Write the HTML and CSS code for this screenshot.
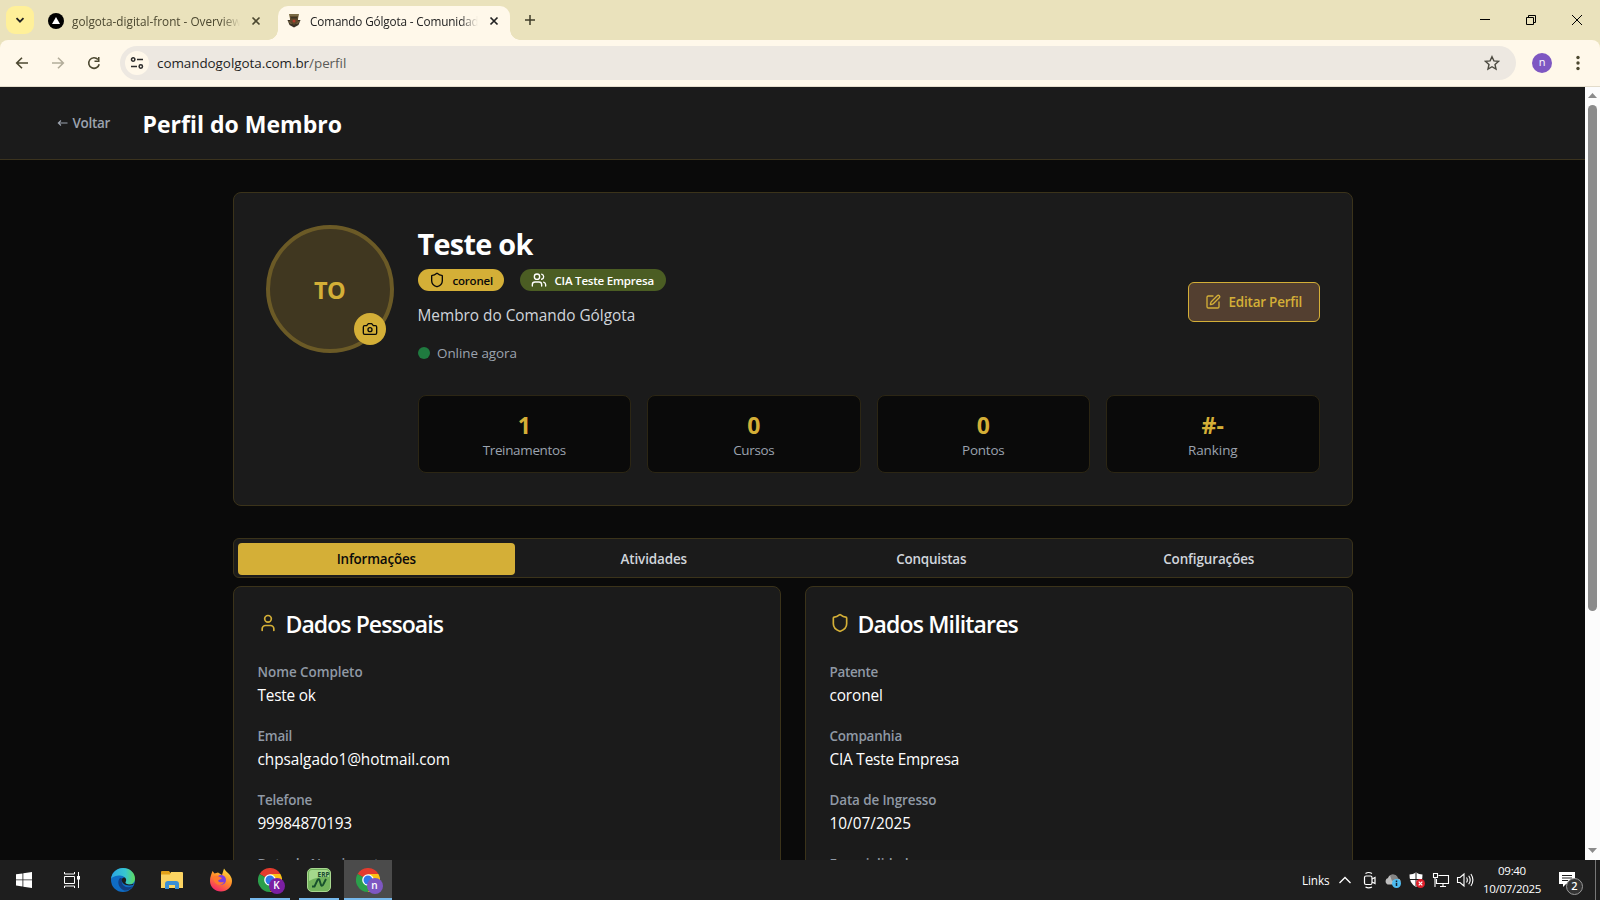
FILE: index.html
```html
<!DOCTYPE html>
<html lang="pt-BR">
<head>
<meta charset="utf-8">
<title>Comando Gólgota - Comunidade</title>
<link rel="stylesheet" href="styles.css">
</head>
<body>
<div class="screen">

  <div class="tabstrip">
    <div class="tab-search"><svg width="10" height="10" viewBox="0 0 10 10"><path d="M1.5 3.2 5 6.7 8.5 3.2" fill="none" stroke="#222" stroke-width="1.8"/></svg></div>
    <div class="tab tab-idle">
      <svg class="fav" width="16" height="16" viewBox="0 0 16 16"><circle cx="8" cy="8" r="8" fill="#000"/><path d="M8 4 12 11H4z" fill="#fff"/></svg>
      <span class="tab-title">golgota-digital-front - Overview</span>
      <svg class="x" width="10" height="10" viewBox="0 0 10 10"><path d="M1.5 1.5l7 7M8.500 1.5l-7 7" stroke="#4c4830" stroke-width="1.6"/></svg>
    </div>
    <div class="tab tab-active">
      <svg class="fav" width="16" height="16" viewBox="0 0 16 16"><path d="M3 1h10l-1 5H4z" fill="#7a6a44"/><path d="M1.500 7h13l-2 5L8 14.500 3.500 12z" fill="#3a3024"/><path d="M4 3h8v6l-4 3-4-3z" fill="#5e4a2c"/><path d="M5 4h6v1.500H5z" fill="#3d3422"/><circle cx="8" cy="8" r="1.500" fill="#b23a2b"/><path d="M2.500 8l3 3M13.500 8l-3 3" stroke="#8b7748"/></svg>
      <span class="tab-title">Comando Gólgota - Comunidade</span>
      <svg class="x" width="10" height="10" viewBox="0 0 10 10"><path d="M1.500 1.500l7 7M8.500 1.500l-7 7" stroke="#222" stroke-width="1.700"/></svg>
    </div>
    <svg class="plus" width="12" height="12" viewBox="0 0 12 12"><path d="M6 1v10M1 6h10" stroke="#3f3c28" stroke-width="1.500"/></svg>
    <div class="win">
      <svg width="12" height="12" viewBox="0 0 12 12"><path d="M1 5.500h10" stroke="#000"/></svg>
      <svg width="12" height="12" viewBox="0 0 12 12"><path d="M1.500 3.500h7v7h-7zM3.500 3.500v-2h7v7h-2" fill="none" stroke="#000"/></svg>
      <svg width="12" height="12" viewBox="0 0 12 12"><path d="M1 1l10 10M11 1 1 11" stroke="#000"/></svg>
    </div>
  </div>

  <div class="toolbar-wrap"><div class="toolbar">
    <svg width="16" height="16" viewBox="0 0 16 16"><path d="M14 8H3M8 2.700 2.700 8 8 13.300" fill="none" stroke="#4c4830" stroke-width="1.600"/></svg>
    <svg width="16" height="16" viewBox="0 0 16 16"><path d="M2 8h11M8 2.700 13.300 8 8 13.300" fill="none" stroke="#b3ad9a" stroke-width="1.600"/></svg>
    <svg width="16" height="16" viewBox="0 0 16 16"><path d="M13.200 9.200A5.300 5.300 0 1 1 12 4.500" fill="none" stroke="#4c4830" stroke-width="1.600"/><path d="M13.500 2v5h-5V5.500H12V2z" fill="#4c4830"/></svg>
    <div class="omnibox">
      <span class="site"><svg width="14" height="14" viewBox="0 0 14 14" fill="none" stroke="#2b2b2b" stroke-width="1.500"><circle cx="3.200" cy="3.500" r="1.700"/><path d="M7 3.500h6M1 10.500h6"/><circle cx="10.800" cy="10.500" r="1.700"/></svg></span>
      <span class="url t05">comandogolgota.com.br<span class="path">/perfil</span></span>
      <svg class="star" width="16" height="16" viewBox="0 0 16 16"><path d="M8 1.700l1.900 4.200 4.500.5-3.400 3.100 1 4.500L8 11.700 4 14l1-4.500L1.600 6.400l4.500-.5z" fill="none" stroke="#4c4a40" stroke-width="1.400"/></svg>
    </div>
    <span class="profile">n</span>
    <svg class="dots" width="4" height="16" viewBox="0 0 4 16" fill="#4c4830"><circle cx="2" cy="2.500" r="1.700"/><circle cx="2" cy="8" r="1.700"/><circle cx="2" cy="13.500" r="1.700"/></svg>
  </div></div>

  <div class="viewport">
    <div class="page">
      <header class="page-head">
        <a class="back t2"><svg class="arrow" width="11" height="8" viewBox="0 0 11 8"><path d="M10.500 4H1.500M4 1.500 1.300 4 4 6.500" fill="none" stroke="#9ca3af" stroke-width="1.100"/></svg>Voltar</a>
        <h1>Perfil do Membro</h1>
      </header>

      <main>
        <section class="card hero">
          <div class="avatar">TO
            <span class="camera"><svg class="ic" width="16" height="16" viewBox="0 0 24 24"><path d="M14.500 4h-5L7 7H4a2 2 0 0 0-2 2v9a2 2 0 0 0 2 2h16a2 2 0 0 0 2-2V9a2 2 0 0 0-2-2h-3l-2.500-3z"/><circle cx="12" cy="13" r="3"/></svg></span>
          </div>
          <div class="hero-body">
            <div class="hero-top">
              <div>
                <h2 class="name">Teste ok</h2>
                <div class="badges">
                  <span class="badge gold t2"><svg class="ic" width="16" height="16" viewBox="0 0 24 24"><path d="M20 13c0 5-3.500 7.500-7.660 8.950a1 1 0 0 1-.67-.01C7.500 20.500 4 18 4 13V6a1 1 0 0 1 1-1c2 0 4.500-1.200 6.240-2.720a1.170 1.170 0 0 1 1.520 0C14.510 3.810 17 5 19 5a1 1 0 0 1 1 1z"/></svg>coronel</span>
                  <span class="badge green t2"><svg class="ic" width="16" height="16" viewBox="0 0 24 24"><path d="M16 21v-2a4 4 0 0 0-4-4H6a4 4 0 0 0-4 4v2"/><circle cx="9" cy="7" r="4"/><path d="M22 21v-2a4 4 0 0 0-3-3.870M16 3.130a4 4 0 0 1 0 7.750"/></svg>CIA Teste Empresa</span>
                </div>
                <p class="role">Membro do Comando Gólgota</p>
                <p class="online t05"><i></i>Online agora</p>
              </div>
              <button class="edit t2"><svg class="ic" width="16" height="16" viewBox="0 0 24 24"><path d="M12 3H5a2 2 0 0 0-2 2v14a2 2 0 0 0 2 2h14a2 2 0 0 0 2-2v-7"/><path d="M18.375 2.625a1 1 0 0 1 3 3l-9.013 9.014a2 2 0 0 1-.853.505l-2.873.84a.5.5 0 0 1-.62-.62l.84-2.873a2 2 0 0 1 .506-.852z"/></svg>Editar Perfil</button>
            </div>
            <div class="stats">
              <div class="stat"><b>1</b><span class="t3">Treinamentos</span></div>
              <div class="stat"><b>0</b><span class="t3">Cursos</span></div>
              <div class="stat"><b>0</b><span class="t2">Pontos</span></div>
              <div class="stat"><b>#-</b><span class="t05">Ranking</span></div>
            </div>
          </div>
        </section>

        <nav class="tabs">
          <span class="on t2">Informações</span><span class="t1">Atividades</span><span class="t2">Conquistas</span><span class="t1">Configurações</span>
        </nav>

        <div class="cols">
          <section class="card info">
            <h3><svg class="ic" width="20" height="20" viewBox="0 0 24 24"><path d="M19 21v-2a4 4 0 0 0-4-4H9a4 4 0 0 0-4 4v2"/><circle cx="12" cy="7" r="4"/></svg><span class="wide">Dados Pessoais</span></h3>
            <dl>
              <dt class="t05">Nome Completo</dt><dd class="t2">Teste ok</dd>
              <dt class="t2">Email</dt><dd class="t05">chpsalgado1@hotmail.com</dd>
              <dt class="t2">Telefone</dt><dd class="t2">99984870193</dd>
              <dt class="t1">Data de Nascimento</dt>
            </dl>
          </section>
          <section class="card info">
            <h3><svg class="ic" width="20" height="20" viewBox="0 0 24 24"><path d="M20 13c0 5-3.500 7.500-7.660 8.950a1 1 0 0 1-.67-.01C7.500 20.500 4 18 4 13V6a1 1 0 0 1 1-1c2 0 4.500-1.200 6.240-2.720a1.170 1.170 0 0 1 1.520 0C14.510 3.810 17 5 19 5a1 1 0 0 1 1 1z"/></svg><span>Dados Militares</span></h3>
            <dl>
              <dt class="t3">Patente</dt><dd class="t1">coronel</dd>
              <dt class="t2">Companhia</dt><dd class="t2">CIA Teste Empresa</dd>
              <dt class="t1">Data de Ingresso</dt><dd>10/07/2025</dd>
              <dt class="t1">Especialidade</dt>
            </dl>
          </section>
        </div>
      </main>
    </div>
    <div class="scrollbar">
      <svg width="9" height="5" viewBox="0 0 9 5"><path d="M4.500 0 9 5H0z" fill="#8b8b8b"/></svg>
      <div class="thumb"></div>
      <svg class="down" width="9" height="5" viewBox="0 0 9 5"><path d="M0 0h9L4.500 5z" fill="#8b8b8b"/></svg>
    </div>
  </div>

  <div class="taskbar">
    <div class="slot sys"><svg width="16" height="16" viewBox="0 0 16 16" fill="#fff"><path d="M0 2.300 6.500 1.400v6.100H0zM7.300 1.300 16 0v7.500H7.300zM0 8.300h6.500v6.200L0 13.600zM7.300 8.300H16V16l-8.700-1.200z"/></svg></div>
    <div class="slot sys"><svg width="16" height="16" viewBox="0 0 16 16" fill="none" stroke="#fff"><path d="M.5 4.500h10v7H.5zM.5 0v2h10V0M.5 16v-2h10v2M14.500 0v16"/><path d="M13 4h3v3.500h-3z" fill="#fff" stroke="none"/></svg></div>
    <div class="slot"><svg width="24" height="24" viewBox="0 0 24 24">
      <defs><linearGradient id="eg" x1="0" x2="1"><stop offset="0" stop-color="#2aa5e4"/><stop offset=".6" stop-color="#37c6d0"/><stop offset="1" stop-color="#5fdb5b"/></linearGradient></defs>
      <circle cx="12" cy="12" r="12" fill="#0f6cc4"/><path d="M0 11C1 4 6 0 12 0c7 0 12 5 12 10.500 0 4-3 6-6 6-3 0-4.500-1.200-3.500-2.500C16 11 13 7.500 9 7.500 5 7.500 1 9 0 11z" fill="url(#eg)"/><path d="M9 10c-3 3-2 9 3 12 4 1.500 8-.5 10-4-5 2.500-10 1-11-3-.4-1.800 0-3 .8-4-.8-.9-1.800-1.200-2.800-1z" fill="#123f83"/><path d="M14.500 14c1-1.500 1-3-.5-4.500-2-.5-3 .7-3.200 2.500-.1 3.500 4 6.500 11.200 5l.6-1.200c-4 1.700-8.800.2-8.100-1.800z" fill="#1c1c1c"/></svg></div>
    <div class="slot"><svg width="22" height="18" viewBox="0 0 22 18"><path d="M0 1q0-1 1-1h7l1.500 2H21q1 0 1 1v14H0z" fill="#e3a21a"/><path d="M0 3.500h9L10 1h11q1 0 1 1v15H0z" fill="#fcd462"/><path d="M4 18v-5q0-3 3-3h8q3 0 3 3v5h-4v-4H8v4z" fill="#3b8fd6"/></svg></div>
    <div class="slot"><svg width="24" height="24" viewBox="0 0 24 24"><defs><linearGradient id="ff" x1=".8" y1="0" x2=".3" y2="1"><stop offset="0" stop-color="#ffe23c"/><stop offset=".5" stop-color="#ff8a2a"/><stop offset="1" stop-color="#f5246b"/></linearGradient></defs><path d="M2 7 3.500 3l2 2.500L9 4.500 13 7l2-6.500c1.500 2 2.500 3.500 4.500 5 2 2 3.500 4.500 3.500 7.500 0 6-5 10.500-11 10.500S1 19 1 13c0-2 .2-4 1-6z" fill="url(#ff)"/><circle cx="12" cy="12" r="5" fill="#7a3ee0"/><path d="M4 9c2-1.500 4-1.500 6-.5l3 1.500c-1 1.500-3.500 1.500-4 3 1.500 2 5 1 6 1-1 2.500-4 3.500-6.500 2.500C5.500 15 4 12 4 9z" fill="#ff7a2e"/></svg></div>
    <div class="slot run"><svg class="chrome" width="24" height="24" viewBox="0 0 24 24"><path d="M12 12 1.600 6A12 12 0 0 1 22.400 6z" fill="#e33b2e"/><path d="M12 12v12A12 12 0 0 1 1.600 6z" fill="#2b9f4b"/><path d="M12 6h10.400a12 12 0 0 1-10.400 18l5-9z" fill="#fbc116"/><circle cx="12" cy="12" r="5.800" fill="#fff"/><circle cx="12" cy="12" r="4.500" fill="#2f78e8"/></svg><em class="k">K</em></div>
    <div class="slot run"><svg width="24" height="24" viewBox="0 0 24 24"><rect x=".5" y=".5" width="23" height="23" rx="4.500" fill="#72b35c" stroke="#a8d890"/><path d="M2 5q0-3 3-3h14q3 0 3 3v4Q12 8 2 13z" fill="#a4d98c"/><path d="M5 18.500h2.500L10.500 12q1.300-1.500 2 0l1.500 5q.8 1.500 2 0L19 11" fill="none" stroke="#17502d" stroke-width="1.900"/><text x="10.500" y="8.500" font-family="Open Sans,sans-serif" font-size="6.500" font-weight="700" fill="#174a30">ERP</text></svg></div>
    <div class="slot run current"><svg class="chrome" width="24" height="24" viewBox="0 0 24 24"><path d="M12 12 1.600 6A12 12 0 0 1 22.400 6z" fill="#e33b2e"/><path d="M12 12v12A12 12 0 0 1 1.600 6z" fill="#2b9f4b"/><path d="M12 6h10.400a12 12 0 0 1-10.400 18l5-9z" fill="#fbc116"/><circle cx="12" cy="12" r="5.800" fill="#fff"/><circle cx="12" cy="12" r="4.500" fill="#2f78e8"/></svg><em>n</em></div>

    <div class="tray">
      <span class="links">Links</span>
      <svg width="14" height="10" viewBox="0 0 14 10"><path d="M1.500 8 7 2.500 12.500 8" fill="none" stroke="#fff" stroke-width="1.300"/></svg>
      <svg width="16" height="18" viewBox="0 0 16 18" fill="none" stroke="#fff" stroke-width="1.200"><rect x="2.500" y="5" width="7.500" height="8.500" rx="1.500"/><path d="M10 8l3-1.500v6L10 11M3.500 2.500Q6.500.5 10 2.500M3.500 16q3 1.700 6.500 0"/></svg>
      <svg width="18" height="18" viewBox="0 0 18 18"><path d="M3.500 13.500A3.500 3.500 0 0 1 4 7a5 5 0 0 1 9.500.5 3 3 0 0 1 0 6z" fill="#bdbdbd"/><path d="M6 4.500a5 5 0 0 1 8 3L8 10z" fill="#858585"/><circle cx="12.500" cy="12.500" r="4.500" fill="#4cbcf2"/><path d="M12.500 11.700V15M12.500 9.500V11" stroke="#123" stroke-width="1.500"/></svg>
      <svg width="18" height="18" viewBox="0 0 18 18"><path d="M8 1.500Q11 3.500 14.500 3.500 15 12 8 16 1 12 1.500 3.500 5 3.500 8 1.500z" fill="#fff"/><path d="M8 2v13.500M1.500 8.500h13" stroke="#1e1e1e"/><circle cx="12.500" cy="12.500" r="4.500" fill="#e0202c"/><path d="M10.700 10.700l3.600 3.600M14.300 10.700l-3.600 3.600" stroke="#fff" stroke-width="1.200"/></svg>
      <svg width="18" height="16" viewBox="0 0 18 16" fill="none" stroke="#fff" stroke-width="1.100"><path d="M6.500 3.500h10v8H4.500V7M8 14.500h6M11 11.500v3M1.500 1.500h4v4h-4zM3 5.500v9.500"/></svg>
      <svg width="18" height="16" viewBox="0 0 18 16" fill="none" stroke="#fff" stroke-width="1.100"><path d="M1.500 5.500h2.500l4-3.500v12l-4-3.500H1.500zM10.500 5.500q1.700 2.500 0 5M12.700 3.700q3 4.300 0 8.600M14.900 2q4 6 0 12"/></svg>
      <div class="clock"><span>09:40</span><span>10/07/2025</span></div>
      <div class="notif"><svg width="16" height="16" viewBox="0 0 16 16"><path d="M0 0h16v12H7l-3 3v-3H0z" fill="#fff"/><path d="M3 3.500h10M3 6h10M3 8.500h6" stroke="#1e1e1e"/></svg><em>2</em></div>
    </div>
  </div>
</div>
</body>
</html>
```
FILE: styles.css
```css
* { box-sizing: border-box; margin: 0; padding: 0; }
body { font-family: "Open Sans", "Noto Sans", sans-serif; background: #0a0a0a; color: #fff; overflow: hidden; }
svg { display: block; flex: none; }
.screen { width: 1600px; height: 900px; display: flex; flex-direction: column; overflow: hidden; }
.t05 { letter-spacing: -.05px; }
.t1 { letter-spacing: -.12px; }
.t2 { letter-spacing: -.2px; }
.t3 { letter-spacing: -.32px; }

/* Browser chrome */
.tabstrip { height: 40px; background: #eae2bc; display: flex; align-items: flex-start; padding: 6px 0 0 6px; flex: none; }
.tab-search { width: 28px; height: 28px; border-radius: 9px; background: #fff099; display: grid; place-items: center; }
.tab { height: 34px; display: flex; align-items: center; padding-bottom: 5px; position: relative; }
.tab-idle { width: 230px; margin-left: 14px; }
.tab-active { width: 232px; background: #fff8ea; border-radius: 10px 10px 0 0; padding-left: 8px; }
.tab-active::before, .tab-active::after { content: ""; position: absolute; bottom: 0; width: 10px; height: 10px; }
.tab-active::before { left: -10px; background: radial-gradient(circle at 0 0, transparent 9.500px, #fff8ea 10px); }
.tab-active::after { right: -10px; background: radial-gradient(circle at 100% 0, transparent 9.500px, #fff8ea 10px); }
.tab-title { width: 168px; margin-left: 8px; font-size: 11.750px; line-height: 20px; white-space: nowrap; overflow: hidden; color: #4c4830; mask-image: linear-gradient(90deg, #000 150px, transparent 168px); }
.tab-active .tab-title { color: #222; letter-spacing: -.15px; }
.tab .x { margin-left: 11px; }
.plus { margin: 8px 0 0 14px; }
.win { margin-left: auto; display: flex; gap: 34px; padding: 8px 17px 0 0; }
.toolbar-wrap { background: #eae2bc; flex: none; }
.toolbar { height: 47px; background: #fff8ea; border-bottom: 1px solid #e3dccb; display: flex; align-items: center; padding-left: 14px; gap: 20px; border-radius: 8px 8px 0 0; }
.omnibox { width: 1396px; height: 34px; border-radius: 17px; background: #ede8e1; display: flex; align-items: center; padding-left: 5px; margin-left: -2px; }
.site { width: 24px; height: 24px; border-radius: 50%; background: #fff8ea; display: grid; place-items: center; }
.url { margin-left: 8px; font-size: 13.440px; line-height: 20px; color: #1f1f1f; }
.path { color: #5b5b58; }
.star { margin-left: auto; margin-right: 16px; }
.profile { width: 20px; height: 20px; margin-left: -4px; border-radius: 50%; background: #7e57c2; font: 11px/18px "Open Sans", sans-serif; text-align: center; }
.dots { margin-left: 4px; }

/* Page */
.viewport { height: 773px; display: flex; overflow: hidden; flex: none; }
.page { width: 1585px; background: #0a0a0a; }
.page-head { height: 73px; background: #1b1b1b; border-bottom: 1px solid #3b331e; display: flex; align-items: center; padding-left: 57px; }
.back { width: 85.500px; font-size: 13.440px; font-weight: 600; color: #9ca3af; line-height: 20px; white-space: nowrap; display: flex; align-items: center; gap: 4.500px; letter-spacing: -.3px; }
.page-head h1 { font-size: 23.040px; line-height: 32px; font-weight: 700; padding-top: 2px; }
main { width: 1120px; margin: 32px auto 0; }
.card { background: #1b1b1b; border: 1px solid #3b331a; border-radius: 8px; }
.ic { fill: none; stroke: currentColor; stroke-width: 2; stroke-linecap: round; stroke-linejoin: round; }
.hero { height: 314px; padding: 32px; display: flex; gap: 24px; }
.avatar { position: relative; width: 128px; height: 128px; flex: none; border-radius: 50%; border: 4px solid #6b5a26; background: #403720; color: #d4af37; font-size: 23.500px; font-weight: 700; display: grid; place-items: center; padding-top: 2px; letter-spacing: -.7px; }
.camera { position: absolute; right: 4px; bottom: 4px; width: 32px; height: 32px; border-radius: 50%; background: #d4af37; color: #0a0a0a; display: grid; place-items: center; }
.hero-body { flex: 1; }
.hero-top { display: flex; justify-content: space-between; height: 138px; }
.name { font-size: 28.800px; line-height: 38px; font-weight: 700; letter-spacing: -.7px; }
.badges { display: flex; gap: 16px; margin-top: 6px; }
.badge { height: 22px; border-radius: 11px; padding-left: 11px; display: flex; align-items: center; gap: 8px; font-size: 11.520px; font-weight: 600; white-space: nowrap; }
.gold { width: 86px; background: #d4af37; color: #0a0a0a; }
.green { width: 146px; background: #4b5d23; }
.role { margin-top: 13px; font-size: 15.360px; line-height: 24px; color: #d1d5db; }
.online { margin-top: 15px; font-size: 13.440px; line-height: 20px; color: #9ca3af; display: flex; align-items: center; gap: 7.500px; }
.online i { width: 12px; height: 12px; border-radius: 50%; background: #1f7a3f; }
.edit { width: 132px; height: 40px; margin-top: 57px; border: 1px solid #d4af37; border-radius: 6px; background: #533f30; color: #d4af37; font-family: inherit; font-size: 13.440px; font-weight: 600; display: flex; align-items: center; padding-left: 16px; gap: 8px; white-space: nowrap; }
.stats { margin-top: 32px; display: grid; grid-template-columns: repeat(4, 1fr); gap: 16px; }
.stat { height: 78px; background: #0a0a0a; border: 1px solid #2c2614; border-radius: 8px; padding-top: 15px; display: flex; flex-direction: column; align-items: center; }
.stat b { font-size: 23.040px; line-height: 28px; color: #d4af37; }
.stat span { margin-top: 1px; font-size: 13.440px; line-height: 20px; color: #9ca3af; }
.tabs { margin-top: 32px; height: 40px; padding: 4px; border: 1px solid #3b331a; border-radius: 6px; background: #1b1b1b; display: grid; grid-template-columns: repeat(4, 1fr); font-size: 13.440px; font-weight: 600; line-height: 32px; text-align: center; color: #d1d5db; }
.tabs span { height: 32px; border-radius: 4px; }
.tabs .on { background: #d4af37; color: #0a0a0a; }
.cols { margin-top: 8px; display: grid; grid-template-columns: 1fr 1fr; gap: 24px; }
.info { height: 400px; padding: 25px 24px; }
.info h3 { display: flex; align-items: center; gap: 8px; font-size: 23.040px; line-height: 24px; font-weight: 600; letter-spacing: -.85px; }
.info .wide { letter-spacing: -.95px; }
.info h3 svg { color: #d4af37; margin-top: -2px; }
.info dl { margin-top: 26px; }
.info dt { font-size: 13.440px; line-height: 20px; font-weight: 600; color: #9099a5; }
.info dd { margin: 2px 0 18px; font-size: 15.360px; line-height: 24px; }
.scrollbar { width: 15px; background: #fcfcfc; display: flex; flex-direction: column; align-items: center; padding: 6px 0 7px; }
.thumb { width: 9px; height: 506px; margin-top: 7px; border-radius: 5px; background: #8b8b8b; }
.down { margin-top: auto; }

/* Taskbar */
.taskbar { height: 40px; background: #1e1e1e; display: flex; flex: none; }
.slot { width: 49px; height: 40px; display: grid; place-items: center; position: relative; }
.sys { width: 48px; }
.sys + .slot:not(.sys) { margin-left: 2.500px; }
.run { background: linear-gradient(#76b9ed, #76b9ed) center bottom / 40px 2px no-repeat; }
.current { width: 48px; background: linear-gradient(#76b9ed, #76b9ed) center bottom / 48px 2px no-repeat, #4b4b4b; }
.slot em { position: absolute; left: 23px; top: 18px; width: 16px; height: 16px; border-radius: 50%; background: #7e57c2; font: 600 10px/15px "Open Sans", sans-serif; text-align: center; }
.slot .k { background: #7b1fa2; }
.tray { margin-left: auto; display: flex; align-items: center; width: 298px; }
.links { width: 36px; font-size: 11.700px; letter-spacing: -.1px; }
.tray > svg + svg { margin-left: 6px; }
.tray > svg:nth-of-type(2) { margin-left: 10px; }
.clock { width: 60px; margin-left: 8px; display: flex; flex-direction: column; align-items: center; font-size: 11.520px; line-height: 18px; letter-spacing: -.32px; }
.notif { position: relative; margin-left: 17px; }
.notif em { position: absolute; left: 7px; top: 6px; width: 17px; height: 17px; border-radius: 50%; border: 1px solid #999; background: #333; font: 600 11px/14px "Open Sans", sans-serif; text-align: center; }
.tray::after { content: ""; width: 1px; height: 40px; margin-left: auto; margin-right: 4px; background: #777; }
```
